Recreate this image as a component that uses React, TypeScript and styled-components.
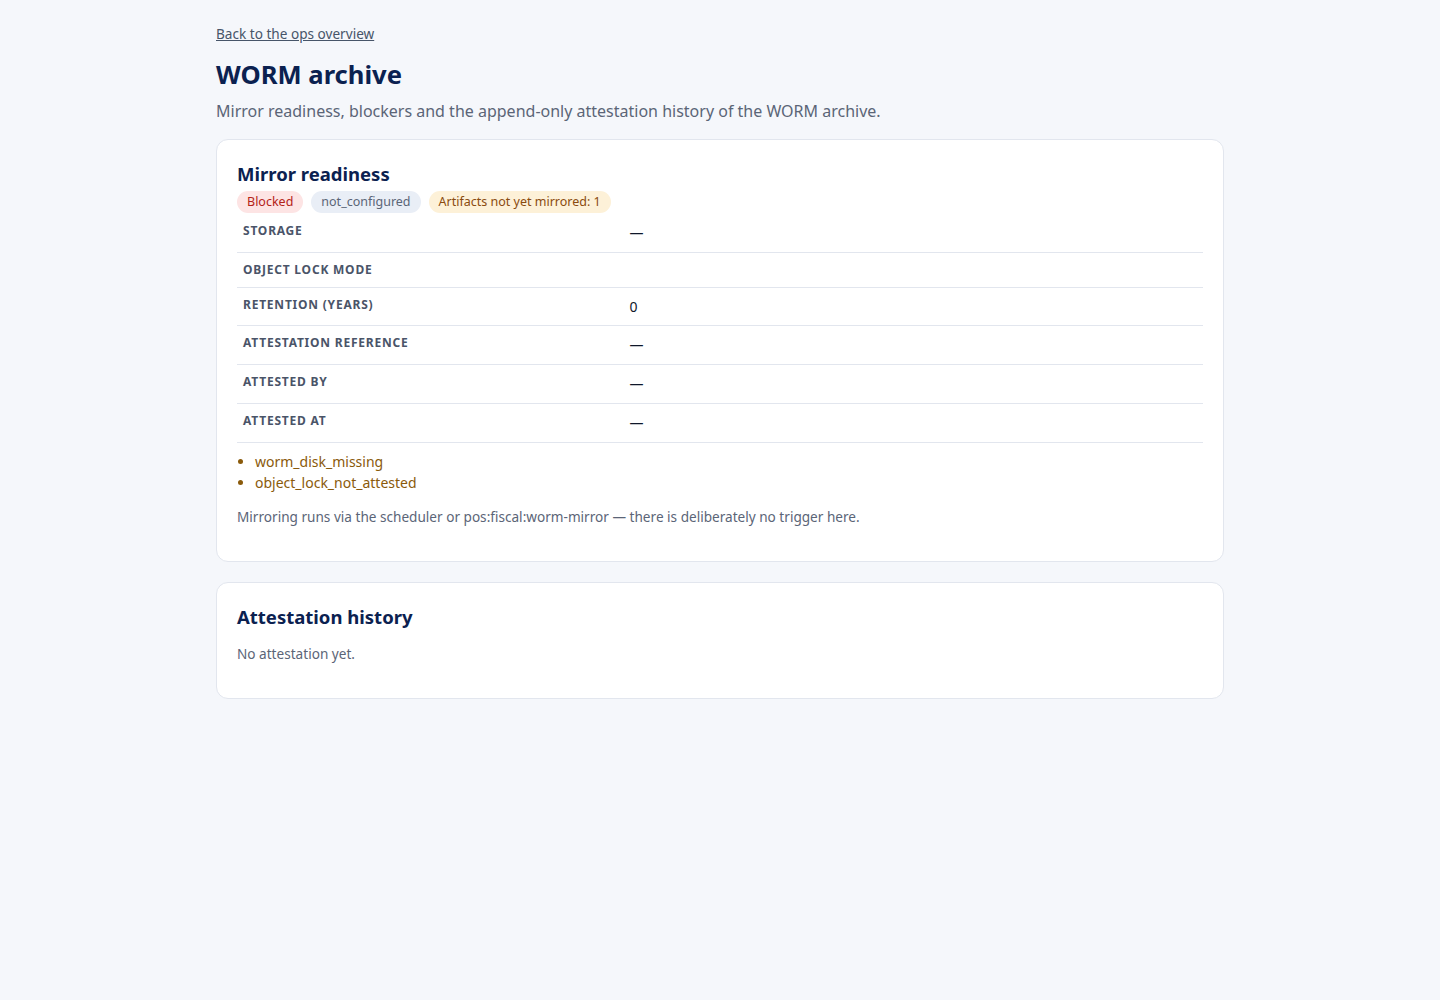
import styled, { createGlobalStyle } from "styled-components";

const GlobalStyle = createGlobalStyle`
    body {
        margin: 0;
        background: #f5f7fb;
        font-family: "Noto Sans", "Open Sans", sans-serif;
        color: #0f172a;
    }
`;

const Page = styled.main`
    max-width: 1008px;
    margin: 0 auto;
    padding: 22px 0 40px;
`;

const BackLink = styled.a`
    display: inline-block;
    font-size: 13.6px;
    line-height: 20px;
    color: #475569;
    text-decoration: underline;
    margin-bottom: 14px;
`;

const Title = styled.h1`
    margin: 0 0 7px;
    font-size: 25.6px;
    line-height: 34px;
    font-weight: 700;
    color: #0b2150;
`;

const Lead = styled.p`
    margin: 0 0 16px;
    font-size: 16px;
    line-height: 24px;
    color: #5b6577;
`;

const Card = styled.section`
    background: #fff;
    border: 1px solid #e2e6ee;
    border-radius: 12px;
    padding: 20px;
    & + & {
        margin-top: 20px;
    }
`;

const CardTitle = styled.h2`
    margin: 0 0 4px;
    font-size: 18.5px;
    line-height: 27px;
    font-weight: 700;
    color: #0b2150;
`;

const Badges = styled.div`
    display: flex;
    gap: 8px;
`;

type Tone = "danger" | "neutral" | "warning";

const tones: Record<Tone, { bg: string; fg: string }> = {
    danger: { bg: "#fde4e4", fg: "#b42318" },
    neutral: { bg: "#e9eef6", fg: "#5b6577" },
    warning: { bg: "#fdf1d8", fg: "#8a4b0f" },
};

const Badge = styled.span<{ $tone: Tone }>`
    display: inline-block;
    padding: 2px 10px;
    border-radius: 999px;
    font-size: 12.5px;
    line-height: 18px;
    background: ${(p) => tones[p.$tone].bg};
    color: ${(p) => tones[p.$tone].fg};
`;

const Table = styled.table`
    width: 100%;
    margin-top: 1px;
    border-collapse: collapse;
`;

const Row = styled.tr`
    border-bottom: 1px solid #e2e6ee;
`;

const Label = styled.th`
    width: 40%;
    text-align: left;
    vertical-align: top;
    padding: 7px 6px 6.8px;
    font-size: 12px;
    line-height: 20px;
    font-weight: 700;
    letter-spacing: 0.065em;
    text-transform: uppercase;
    color: #4a5468;
`;

const Value = styled.td`
    vertical-align: top;
    padding: 7px 6px 6.8px;
    font-size: 14px;
    line-height: 24px;
    color: #0f172a;
`;

const Blockers = styled.ul`
    margin: 8px 0 0;
    padding-left: 18px;
    font-size: 14px;
    line-height: 21px;
    color: #8a5a0b;
`;

const Note = styled.p`
    margin: 14px 0;
    font-size: 13.6px;
    line-height: 20px;
    color: #5b6577;
`;

const rows: [string, string][] = [
    ["Storage", "—"],
    ["Object lock mode", ""],
    ["Retention (years)", "0"],
    ["Attestation reference", "—"],
    ["Attested by", "—"],
    ["Attested at", "—"],
];

const App = () => (
    <>
        <GlobalStyle />
        <Page>
            <BackLink href="#">Back to the ops overview</BackLink>
            <Title>WORM archive</Title>
            <Lead>Mirror readiness, blockers and the append-only attestation history of the WORM archive.</Lead>

            <Card>
                <CardTitle>Mirror readiness</CardTitle>
                <Badges>
                    <Badge $tone="danger">Blocked</Badge>
                    <Badge $tone="neutral">not_configured</Badge>
                    <Badge $tone="warning">Artifacts not yet mirrored: 1</Badge>
                </Badges>
                <Table>
                    <tbody>
                        {rows.map(([label, value]) => (
                            <Row key={label}>
                                <Label>{label}</Label>
                                <Value>{value}</Value>
                            </Row>
                        ))}
                    </tbody>
                </Table>
                <Blockers>
                    <li>worm_disk_missing</li>
                    <li>object_lock_not_attested</li>
                </Blockers>
                <Note>Mirroring runs via the scheduler or pos:fiscal:worm-mirror — there is deliberately no trigger here.</Note>
            </Card>

            <Card>
                <CardTitle>Attestation history</CardTitle>
                <Note>No attestation yet.</Note>
            </Card>
        </Page>
    </>
);

export default App;
